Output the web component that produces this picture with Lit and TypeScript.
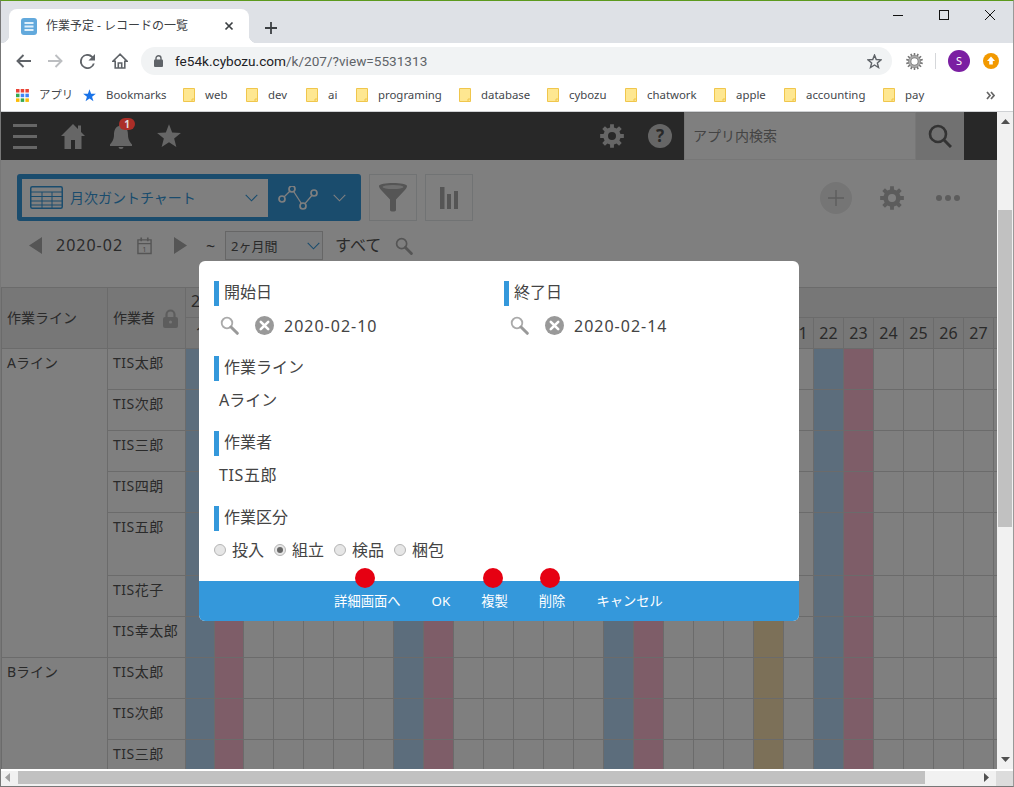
import { LitElement, html, css, svg } from "lit";
import { customElement } from "lit/decorators.js";

const gearPath = (cx: number, cy: number, ro: number, ri: number, hole: number, n = 8) => {
  let d = "";
  const step = (Math.PI * 2) / n;
  for (let i = 0; i < n; i++) {
    const a = i * step - Math.PI / 2;
    const w1 = step * 0.2, w2 = step * 0.29;
    const p = (r: number, t: number) => `${(cx + r * Math.cos(t)).toFixed(2)} ${(cy + r * Math.sin(t)).toFixed(2)}`;
    d += `${i ? "L" : "M"}${p(ri, a - w2)}L${p(ro, a - w1)}L${p(ro, a + w1)}L${p(ri, a + w2)}`;
  }
  d += `Z M${cx - hole} ${cy}a${hole} ${hole} 0 1 0 ${hole * 2} 0a${hole} ${hole} 0 1 0 ${-hole * 2} 0Z`;
  return d;
};
const starPts = (cx: number, cy: number, ro: number, ri: number) => {
  const pts: string[] = [];
  for (let i = 0; i < 10; i++) {
    const r = i % 2 ? ri : ro;
    const a = (i * Math.PI) / 5 - Math.PI / 2;
    pts.push(`${(cx + r * Math.cos(a)).toFixed(2)},${(cy + r * Math.sin(a)).toFixed(2)}`);
  }
  return pts.join(" ");
};

const gear = (size: number, color: string) => html`<svg width=${size} height=${size} viewBox="0 0 24 24"><path fill-rule="evenodd" fill=${color} d=${gearPath(12, 12, 12, 8.7, 4)}></path></svg>`;
const chevron = (color: string, w = 13) => html`<svg width=${w} height="8" viewBox="0 0 13 8"><path d="M.7.8 6.5 6.8 12.3.8" fill="none" stroke=${color} stroke-width="1.1"></path></svg>`;
const searchIcon = (w: number, ring: string, handle: string) => html`<svg width=${w} height=${w} viewBox="0 0 19 19"><circle cx="7" cy="7" r="5.3" fill="none" stroke=${ring} stroke-width="1.8"></circle><path d="M11 11 17.3 17.3" stroke=${handle} stroke-width="3" stroke-linecap="round"></path></svg>`;
const clearIcon = html`<svg width="19" height="19" viewBox="0 0 19 19"><circle cx="9.5" cy="9.5" r="9.5" fill="#999"></circle><path d="M5.8 5.8 13.2 13.2M13.2 5.8 5.8 13.2" stroke="#fff" stroke-width="2.6" stroke-linecap="round"></path></svg>`;
const folder = html`<svg class="bi" width="12" height="14" viewBox="0 0 12 14"><path d="M.5.5H11.5V13.5H.5Z" fill="#fee791" stroke="#f0c64c"></path><path d="M9 13.5V11H11.5" fill="none" stroke="#f0c64c"></path></svg>`;

const bookmarks: [string, number][] = [["web", 63], ["dev", 60], ["ai", 50], ["programing", 103], ["database", 88], ["cybozu", 78], ["chatwork", 89], ["apple", 70], ["accounting", 99], ["pay", 60]];

const days = Array.from({ length: 29 }, (_, i) => i + 1);
const dayClass = (d: number) => (d === 20 ? "tan" : d % 7 === 1 ? "sat" : d % 7 === 2 ? "sun" : "");
const dayVisible = (d: number) => d === 1 || (d >= 21 && d <= 27);
const rowsA: [string, boolean][] = [["TIS太郎", false], ["TIS次郎", false], ["TIS三郎", false], ["TIS四朗", false], ["TIS五郎", true], ["TIS花子", false], ["TIS幸太郎", false]];
const rowsB: [string, boolean][] = [["TIS太郎", false], ["TIS次郎", false], ["TIS三郎", false]];

@customElement("app-root")
export class AppRoot extends LitElement {
  static styles = css`
    :host { display: flex; flex-direction: column; box-sizing: border-box; width: 1014px; height: 787px; overflow: hidden; background: #fff;
      border-top: 1px solid #5c9a1e; border-left: 1px solid #777; border-right: 1px solid #999; border-bottom: 1px solid #777;
      font-family: "Noto Sans", "Noto Sans CJK JP", sans-serif; color: #333; }
    svg { display: block; flex: none; }

    .tabs { height: 42px; flex: none; background: #dee1e6; display: flex; align-items: flex-end; padding-left: 8px; position: relative; }
    .tab { width: 240px; height: 34px; box-sizing: border-box; background: #fff; border-radius: 8px 8px 0 0; display: flex; align-items: center; padding-left: 12px; position: relative; }
    .tab::before, .tab::after { content: ""; position: absolute; bottom: 0; width: 8px; height: 8px; }
    .tab::before { left: -8px; background: radial-gradient(circle at 0 0, transparent 8px, #fff 8.5px); }
    .tab::after { right: -8px; background: radial-gradient(circle at 100% 0, transparent 8px, #fff 8.5px); }
    .tab-title { font-size: 12px; line-height: 16px; margin-left: 9px; color: #3c4043; width: 178px; white-space: nowrap; }
    .tab-new { margin: 0 0 9px 16px; }
    .winbtns { margin-left: auto; align-self: flex-start; display: flex; padding-top: 9px; padding-right: 18px; gap: 36px; }

    .toolbar { height: 36px; flex: none; background: #fff; display: flex; align-items: center; padding-left: 15px; }
    .navs { display: flex; align-items: center; gap: 17px; width: 125px; }
    .omni { width: 751px; height: 28px; border-radius: 14px; background: #f1f3f4; display: flex; align-items: center; padding-left: 13px; box-sizing: border-box; }
    .url { font-family: "Roboto", sans-serif; font-size: 13.6px; line-height: 18px; margin-left: 12px; color: #5f6368; white-space: nowrap; }
    .url b { font-weight: 400; color: #202124; }
    .omni .st { margin-left: auto; margin-right: 10px; }
    .exts { display: flex; align-items: center; margin-left: 14px; }
    .sep { width: 1px; height: 16px; background: #d5d7da; margin: 0 12px 0 12px; }
    .avatar { width: 22px; height: 22px; border-radius: 50%; background: #7b1fa2; color: #fff; font: 11px/22px "Noto Sans", sans-serif; text-align: center; }
    .upd { margin-left: 13px; }

    .bm { flex: none; background: #fff; border-bottom: 1px solid #cfd1d4; box-sizing: border-box; height: 33px; display: flex; align-items: center; padding-left: 15px; position: relative; font-size: 11.4px; color: #44474c; }
    .bm span { line-height: 16px; white-space: nowrap; }
    .bitem { display: flex; align-items: center; flex: none; }
    .bitem .bi { margin-right: 10px; }
    .more { margin-left: auto; margin-right: 18px; }

    .body { flex: 1; min-height: 0; display: flex; }
    .main { width: 996px; flex: none; position: relative; overflow: hidden; background: #fff; }
    .vbar { flex: 1; background: #f1f1f1; display: flex; flex-direction: column; align-items: center; padding-top: 7px; box-sizing: border-box; }
    .vthumb { width: 14px; height: 317px; background: #c1c1c1; margin-top: 86px; margin-left: -1px; }
    .vbar .dn { margin-top: auto; margin-bottom: 7px; }
    .hbar { height: 17px; flex: none; background: #f1f1f1; display: flex; align-items: center; border-top: 2px solid #fff; box-sizing: border-box; }
    .hthumb { width: 907px; height: 13px; background: #c1c1c1; margin-left: 8px; margin-bottom: 2px; }
    .hl { margin-left: 4px; margin-bottom: 2px; }
    .hr { margin-left: 59px; margin-bottom: 2px; }
    .corner { margin-left: auto; width: 17px; height: 100%; background: #dcdcdc; }

    .hdr { height: 48px; background: #505050; display: flex; align-items: center; padding-left: 12px; }
    .burger { width: 24px; display: flex; flex-direction: column; gap: 8px; }
    .burger i { display: block; height: 3px; background: #ccc; }
    .hdr-ic { margin-left: 24px; position: relative; }
    .badge { position: absolute; z-index: 2; left: 10px; top: -6px; width: 16px; height: 12px; border-radius: 6px; background: #ab2e28; color: #ddd; font: 700 10px/12px "Noto Sans", sans-serif; text-align: center; }
    .hdr-r { margin-left: auto; display: flex; align-items: center; height: 100%; }
    .help { width: 24px; height: 24px; border-radius: 50%; background: #ccc; color: #505050; font: 700 17px/24px "Noto Sans", sans-serif; text-align: center; margin: 0 12px 0 24px; }
    .sbox { width: 232px; height: 100%; background: #fff; box-sizing: border-box; border: 1px solid #eee; font-size: 14px; line-height: 46px; padding-left: 8px; color: #888; }
    .sbtn { width: 48px; height: 100%; background: #e3e3e3; display: flex; align-items: center; justify-content: center; margin-right: 33px; }

    .bar1 { display: flex; align-items: center; margin: 14px 0 0 16px; height: 47px; }
    .viewsel { width: 344px; height: 47px; box-sizing: border-box; background: #3498db; border-radius: 3px; padding: 5px; display: flex; align-items: center; }
    .vs-in { width: 246px; height: 38px; background: #fff; display: flex; align-items: center; padding-left: 8px; box-sizing: border-box; color: #3498db; font-size: 14px; flex: none; }
    .vs-in span { margin-left: 7px; width: 175px; line-height: 20px; white-space: nowrap; }
    .vs-ic { margin-left: 10px; }
    .vs-ch { margin-left: 15px; }
    .tbtn { width: 48px; height: 47px; box-sizing: border-box; border: 1px solid #e3e7e8; margin-left: 8px; display: flex; align-items: center; justify-content: center; background: #fff; }
    .bar1-r { margin-left: auto; margin-right: 37px; display: flex; align-items: center; }
    .plus { width: 32px; height: 32px; border-radius: 50%; background: #ebebeb; display: flex; align-items: center; justify-content: center; }
    .gear-r { margin-left: 28px; }
    .dots { margin-left: 32px; display: flex; gap: 3px; }
    .dots i { display: block; width: 6px; height: 6px; border-radius: 50%; background: #b8b8b8; }

    .bar2 { display: flex; align-items: center; margin: 10px 0 0 28px; height: 29px; font-size: 16px; color: #555; }
    .date { letter-spacing: 1px; line-height: 22px; }
    .bar2 .date { margin-left: 14px; padding-bottom: 2px; color: #555; }
    .cal { margin-left: 14px; }
    .tri2 { margin-left: 22px; }
    .tilde { margin-left: 19px; width: 7px; line-height: 20px; }
    .select { margin-left: 12px; width: 98px; height: 29px; box-sizing: border-box; border: 1px solid #ccc; background: #f7f9fa; display: flex; align-items: center; padding-left: 5px; font-size: 13px; }
    .select span { width: 76px; line-height: 18px; color: #555; }
    .all { margin-left: 12px; line-height: 22px; padding-bottom: 2px; }
    .srch { margin-left: 14px; }

    table { border-collapse: separate; border-spacing: 0; table-layout: fixed; width: 1053px; margin-top: 27px; }
    th, td { box-sizing: border-box; border-right: 1px solid #d6d6d6; border-bottom: 1px solid #d6d6d6; padding: 0; font-weight: 400; font-size: 14px; line-height: 20px; color: #555; text-align: left; overflow: hidden; white-space: nowrap; vertical-align: top; }
    th { background: #eee; }
    .first { border-left: 1px solid #d6d6d6; }
    thead tr:first-child th { border-top: 1px solid #d6d6d6; height: 31px; }
    thead tr:last-child th { height: 31px; }
    .hcol { vertical-align: middle; padding-left: 5px; }
    .hflex { display: flex; align-items: center; gap: 8px; }
    .ym { padding: 3px 0 0 5px; font-size: 16px; }
    .day { font-size: 16px; text-align: center; vertical-align: middle; }
    .hide-top { border-right: 0; }
    td { height: 41px; }
    .tall td { height: 63px; }
    .cell { padding: 4px 0 0 5px; }
    .name { letter-spacing: .5px; }
    .sat { background: #b9dbf9; }
    .sun { background: #fcbbd0; }
    .tan { background: #f8e0b0; }

    .overlay { position: absolute; inset: 0; z-index: 1; background: rgba(0,0,0,.5); }
    .modal { position: absolute; left: 198px; top: 149px; width: 600px; height: 360px; background: #fff; border-radius: 6px; display: flex; flex-direction: column; }
    .form { flex: 1; padding: 20px 15px 0; display: grid; grid-template-columns: 290px 290px; grid-auto-rows: 75px; align-content: start; }
    .lab { height: 25px; border-left: 5px solid #3498db; padding-left: 5px; font-size: 16px; line-height: 23px; color: #444; }
    .val { margin-top: 8px; height: 22px; line-height: 22px; padding-left: 5px; font-size: 16px; white-space: nowrap; color: #444; }
    .val.person { letter-spacing: .6px; }
    .pick { margin-top: 10px; display: flex; align-items: center; height: 19px; padding-left: 6px; font-size: 16px; color: #444; }
    .pick .x { margin-left: 16px; }
    .pick .date { margin-left: 10px; }
    .radios { margin-top: 9px; height: 20px; display: flex; align-items: center; font-size: 16px; line-height: 20px; color: #444; }
    .radio { display: flex; align-items: center; gap: 6px; margin-right: 10px; }
    .rb { width: 12px; height: 12px; border-radius: 50%; box-sizing: border-box; border: 1px solid #b5b5b5; background: #e6e6e6; display: flex; align-items: center; justify-content: center; }
    .rb i { display: block; width: 6px; height: 6px; border-radius: 50%; background: #666; }
    .span2 { grid-column: 1 / span 2; }
    .foot { height: 40px; background: #3498db; border-radius: 0 0 6px 6px; display: flex; justify-content: center; align-items: center; gap: 31px; padding-right: 1px; }
    .fb { position: relative; color: #fff; font-size: 13.3px; line-height: 40px; }
    .dot::before { content: ""; position: absolute; left: calc(50% - 12px); top: -13px; width: 20px; height: 20px; border-radius: 50%; background: #e60012; }
  `;

  render() {
    return html`
      <div class="tabs">
        <div class="tab">
          <svg width="16" height="17" viewBox="0 0 16 17"><rect width="16" height="17" rx="3" fill="#62a9dc"></rect><path d="M3.5 5H12.5M3.5 8.5H12.5M3.5 12H12.5" stroke="#dff0fb" stroke-width="2"></path></svg>
          <span class="tab-title">作業予定 - レコードの一覧</span>
          <svg width="10" height="10" viewBox="0 0 10 10"><path d="M1.5 1.5 8.5 8.5M8.5 1.5 1.5 8.5" stroke="#3c4043" stroke-width="1.7"></path></svg>
        </div>
        <svg class="tab-new" width="12" height="12" viewBox="0 0 12 12"><path d="M6 0V12M0 6H12" stroke="#3c4043" stroke-width="1.8"></path></svg>
        <div class="winbtns">
          <svg width="10" height="10" viewBox="0 0 10 10"><path d="M0 5.5H10" stroke="#111"></path></svg>
          <svg width="10" height="10" viewBox="0 0 10 10"><rect x=".5" y=".5" width="9" height="9" fill="none" stroke="#111"></rect></svg>
          <svg width="10" height="10" viewBox="0 0 10 10"><path d="M0 0 10 10M10 0 0 10" stroke="#111"></path></svg>
        </div>
      </div>
      <div class="toolbar">
        <div class="navs">
          <svg width="15" height="14" viewBox="0 0 15 14"><path d="M15 7H2M7.5 1 1.5 7 7.5 13" fill="none" stroke="#5f6368" stroke-width="1.9"></path></svg>
          <svg width="15" height="14" viewBox="0 0 15 14"><path d="M0 7H13M7.5 1 13.5 7 7.5 13" fill="none" stroke="#bcbec1" stroke-width="1.9"></path></svg>
          <svg width="15" height="15" viewBox="0 0 16 16"><path fill="#5f6368" d="M13.65 2.35A8 8 0 1 0 15.73 10h-2.08A6 6 0 1 1 8 2c1.66 0 3.14.69 4.22 1.78L9 7h7V0z"></path></svg>
          <svg width="16" height="16" viewBox="0 0 16 16"><path d="M8 1.200 1 8.200H3.200V15H12.800V8.200H15Z M6.300 15V10H9.700V15" fill="none" stroke="#5f6368" stroke-width="1.6"></path></svg>
        </div>
        <div class="omni">
          <svg width="9" height="12" viewBox="0 0 9 12"><rect y="4.500" width="9" height="7.500" rx="1" fill="#5f6368"></rect><path d="M2 5V3.200a2.500 2.500 0 0 1 5 0V5" fill="none" stroke="#5f6368" stroke-width="1.4"></path></svg>
          <span class="url"><b>fe54k.cybozu.com</b>/k/207/?view=5531313</span>
          <svg class="st" width="15" height="15" viewBox="0 0 16 16"><polygon points=${starPts(8, 8.5, 7.3, 3.2)} fill="none" stroke="#5f6368" stroke-width="1.5"></polygon></svg>
        </div>
        <div class="exts">
          <svg width="17" height="17" viewBox="0 0 24 24"><path fill-rule="evenodd" fill="#777" d=${gearPath(12, 12, 12, 9, 4.500, 14)}></path><circle cx="12" cy="12" r="7" fill="none" stroke="#aaa" stroke-width="3"></circle></svg>
          <div class="sep"></div>
          <div class="avatar">S</div>
          <svg class="upd" width="16" height="16" viewBox="0 0 16 16"><circle cx="8" cy="8" r="8" fill="#f29900"></circle><path d="M8 3.500 12 8H9.800V11.500H6.200V8H4Z" fill="#fff"></path></svg>
        </div>
      </div>
      <div class="bm">
        <div class="bitem" style="width:23px"><svg width="13" height="13" viewBox="0 0 13 13">
          ${[0, 1, 2].flatMap((r) => [0, 1, 2].map((c) => svg`<rect x=${c * 4.7} y=${r * 4.7} width="3.500" height="3.500" fill=${["#ea4335", "#ea4335", "#ea4335", "#34a853", "#4285f4", "#4285f4", "#fbbc05", "#34a853", "#fbbc05"][r * 3 + c]}></rect>`))}
        </svg></div>
        <div class="bitem" style="width:44px"><span>アプリ</span></div>
        <div class="bitem" style="width:100px"><svg class="bi" width="13" height="13" viewBox="0 0 14 14"><polygon points=${starPts(7, 7.4, 7.200, 2.900)} fill="#1a73e8"></polygon></svg><span>Bookmarks</span></div>
        ${bookmarks.map(([n, w]) => html`<div class="bitem" style="width:${w}px">${folder}<span>${n}</span></div>`)}
        <svg class="more" width="9" height="9" viewBox="0 0 9 9"><path d="M1 1 4 4.500 1 8M5 1 8 4.500 5 8" fill="none" stroke="#666" stroke-width="1.7"></path></svg>
      </div>

      <div class="body">
        <div class="main">
          <div class="hdr">
            <div class="burger"><i></i><i></i><i></i></div>
            <div class="hdr-ic"><svg width="24" height="25" viewBox="0 0 24 25"><path fill="#ccc" d="M12 0 0 12H3.500V25H10V16H14V25H20.500V12H24L20 8V1.500H17V5Z"></path></svg></div>
            <div class="hdr-ic"><svg width="24" height="25" viewBox="0 0 24 25"><path fill="#ccc" d="M12 0c-1.300 0-2 .9-2 2C6 3.200 5 7 5 11c0 5-2.500 7.500-4 9.500V22H23V20.500C21.500 18.500 19 16 19 11 19 7 18 3.200 14 2c0-1.100-.7-2-2-2Z"></path><path fill="#ccc" d="M9.500 23h5a2.500 2 0 0 1-5 0Z"></path></svg><div class="badge">1</div></div>
            <div class="hdr-ic"><svg width="24" height="24" viewBox="0 0 24 24"><polygon fill="#ccc" points=${starPts(12, 12.8, 12.500, 5.400)}></polygon></svg></div>
            <div class="hdr-r">
              ${gear(24, "#ccc")}
              <div class="help">?</div>
              <div class="sbox">アプリ内検索</div>
              <div class="sbtn"><svg width="24" height="24" viewBox="0 0 24 24"><circle cx="10" cy="10" r="8" fill="none" stroke="#666" stroke-width="2.600"></circle><path d="M15.500 15.500 23 23" stroke="#666" stroke-width="3"></path></svg></div>
            </div>
          </div>

          <div class="bar1">
            <div class="viewsel">
              <div class="vs-in">
                <svg width="33" height="23" viewBox="0 0 33 23"><rect x=".75" y=".75" width="31.500" height="21.500" rx="1.500" fill="none" stroke="#3498db" stroke-width="1.500"></rect><path d="M1 6H32M1 10.500H32M1 15H32M1 19H32M12 6V22M22 6V22" stroke="#3498db"></path></svg>
                <span>月次ガントチャート</span>
                ${chevron("#3498db")}
              </div>
              <svg class="vs-ic" width="40" height="24" viewBox="0 0 40 24"><path d="M4 13 14 3 25 20 36 7" fill="none" stroke="#fff" stroke-width="1.300"></path>${[[4, 13], [14, 3], [25, 20], [36, 7]].map(([x, y]) => svg`<circle cx=${x} cy=${y} r="3" fill="#3498db" stroke="#fff" stroke-width="1.700"></circle>`)}</svg>
              <span class="vs-ch">${chevron("#fff")}</span>
            </div>
            <div class="tbtn"><svg width="28" height="29" viewBox="0 0 28 29"><path fill="#aaa" d="M0 3C0 1 7 0 14 0S28 1 28 3C28 4 27 6 25 8L17 16.500V27C17 29 11 29 11 27V16.500L3 8C1 6 0 4 0 3Z"></path><ellipse cx="14" cy="4" rx="10.500" ry="2" fill="#ddd"></ellipse></svg></div>
            <div class="tbtn"><svg width="18" height="22" viewBox="0 0 18 22"><path fill="#aaa" d="M0 0H4.500V22H0ZM7 7H11V22H7ZM14 4H18V22H14Z"></path></svg></div>
            <div class="bar1-r">
              <div class="plus"><svg width="16" height="16" viewBox="0 0 16 16"><path d="M8 0V16M0 8H16" stroke="#bbb" stroke-width="1.400"></path></svg></div>
              <div class="gear-r">${gear(24, "#b8b8b8")}</div>
              <div class="dots"><i></i><i></i><i></i></div>
            </div>
          </div>

          <div class="bar2">
            <svg width="13" height="17" viewBox="0 0 13 17"><polygon points="13,0 13,17 0,8.500" fill="#aaa"></polygon></svg>
            <span class="date">2020-02</span>
            <svg class="cal" width="15" height="19" viewBox="0 0 16 19"><path d="M1 3.500H15V18H1Z M1 7.500H15" fill="none" stroke="#aaa" stroke-width="1.500"></path><path d="M4.500 1V5M11.500 1V5" stroke="#aaa" stroke-width="1.800"></path><text x="8" y="16" font-size="8" text-anchor="middle" fill="#999" font-family="Noto Sans">1</text></svg>
            <svg class="tri2" width="13" height="17" viewBox="0 0 13 17"><polygon points="0,0 0,17 13,8.500" fill="#aaa"></polygon></svg>
            <span class="tilde">~</span>
            <div class="select"><span>2ヶ月間</span>${chevron("#3498db")}</div>
            <span class="all">すべて</span>
            <span class="srch">${searchIcon(18, "#aaa", "#aaa")}</span>
          </div>

          <table>
            <colgroup><col style="width:107px"><col style="width:78px">${days.map((d) => html`<col style="width:${d < 3 ? 29 : 30}px">`)}</colgroup>
            <thead>
              <tr>
                <th rowspan="2" class="first hcol">作業ライン</th>
                <th rowspan="2" class="hcol"><div class="hflex">作業者<svg width="15" height="19" viewBox="0 0 15 19"><path d="M3.500 9V5.500a4 4 0 0 1 8 0V9" fill="none" stroke="#bbb" stroke-width="2.200"></path><rect y="8" width="15" height="11" rx="2" fill="#bbb"></rect><circle cx="7.500" cy="13" r="1.500" fill="#eee"></circle></svg></div></th>
                <th colspan="29" class="ym hide-top">2</th>
              </tr>
              <tr>${days.map((d) => html`<th class="day">${dayVisible(d) ? d : ""}</th>`)}</tr>
            </thead>
            <tbody>
              ${rowsA.map(([n, tall], i) => html`<tr class=${tall ? "tall" : ""}>
                ${i === 0 ? html`<td rowspan="7" class="first cell">Aライン</td>` : ""}
                <td class="cell name">${n}</td>
                ${days.map((d) => html`<td class=${dayClass(d)}></td>`)}
              </tr>`)}
              ${rowsB.map(([n, tall], i) => html`<tr class=${tall ? "tall" : ""}>
                ${i === 0 ? html`<td rowspan="3" class="first cell">Bライン</td>` : ""}
                <td class="cell name">${n}</td>
                ${days.map((d) => html`<td class=${dayClass(d)}></td>`)}
              </tr>`)}
            </tbody>
          </table>

          <div class="overlay">
            <div class="modal">
              <div class="form">
                <div>
                  <div class="lab">開始日</div>
                  <div class="pick">${searchIcon(19, "#aaa", "#999")}<span class="x">${clearIcon}</span><span class="date">2020-02-10</span></div>
                </div>
                <div>
                  <div class="lab">終了日</div>
                  <div class="pick">${searchIcon(19, "#aaa", "#999")}<span class="x">${clearIcon}</span><span class="date">2020-02-14</span></div>
                </div>
                <div class="span2"><div class="lab">作業ライン</div><div class="val">Aライン</div></div>
                <div class="span2"><div class="lab">作業者</div><div class="val person">TIS五郎</div></div>
                <div class="span2">
                  <div class="lab">作業区分</div>
                  <div class="radios">
                    ${["投入", "組立", "検品", "梱包"].map((t, i) => html`<label class="radio"><span class="rb">${i === 1 ? html`<i></i>` : ""}</span>${t}</label>`)}
                  </div>
                </div>
              </div>
              <div class="foot">
                <span class="fb dot">詳細画面へ</span>
                <span class="fb">OK</span>
                <span class="fb dot">複製</span>
                <span class="fb dot">削除</span>
                <span class="fb">キャンセル</span>
              </div>
            </div>
          </div>
        </div>
        <div class="vbar">
          <svg width="9" height="5" viewBox="0 0 9 5"><polygon points="4.500,0 9,5 0,5" fill="#505050"></polygon></svg>
          <div class="vthumb"></div>
          <svg class="dn" width="9" height="5" viewBox="0 0 9 5"><polygon points="0,0 9,0 4.500,5" fill="#505050"></polygon></svg>
        </div>
      </div>
      <div class="hbar">
        <svg class="hl" width="5" height="9" viewBox="0 0 5 9"><polygon points="5,0 5,9 0,4.500" fill="#a0a0a0"></polygon></svg>
        <div class="hthumb"></div>
        <svg class="hr" width="5" height="9" viewBox="0 0 5 9"><polygon points="0,0 0,9 5,4.500" fill="#505050"></polygon></svg>
        <div class="corner"></div>
      </div>
    `;
  }
}
